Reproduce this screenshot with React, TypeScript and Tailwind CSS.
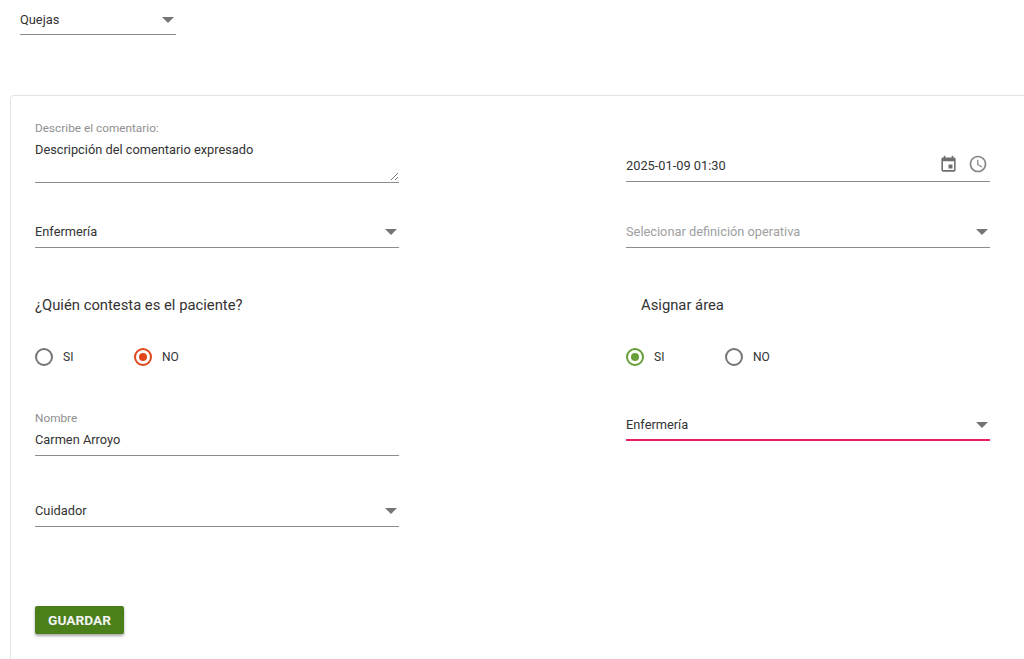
import React from "react";

function Arrow() {
  return (
    <svg width="12" height="6" viewBox="0 0 12 6" className="shrink-0">
      <path d="M0 0h12L6 6z" fill="#757575" />
    </svg>
  );
}

function Select({ text, muted, className }: { text: string; muted?: boolean; className?: string }) {
  return (
    <div className={"flex items-center justify-between border-b border-[#8c8c8c] pr-[2px] " + (className ?? "")}>
      <span className={muted ? "text-[#a0a0a0]" : "text-[#333333]"}>{text}</span>
      <Arrow />
    </div>
  );
}

function Radio({ label, checked, color }: { label: string; checked?: boolean; color?: "orange" | "green" }) {
  const ring = color === "orange" ? "border-[#e0461a]" : color === "green" ? "border-[#689f38]" : "border-[#757575]";
  const dot = color === "orange" ? "bg-[#e0461a]" : "bg-[#689f38]";
  return (
    <div className="flex w-[99px] items-center gap-[10px]">
      <span className={"flex h-[18px] w-[18px] items-center justify-center rounded-full border-2 " + ring}>
        {checked && <span className={"h-[8px] w-[8px] rounded-full " + dot} />}
      </span>
      <span className="text-[12px] text-[#333333]">{label}</span>
    </div>
  );
}

export default function App() {
  return (
    <div className="h-[659px] w-[1024px] overflow-hidden bg-white font-['Roboto',sans-serif] text-[12.8px] leading-5">
      <div className="ml-[20px] w-[156px] pt-[2px]">
        <Select text="Quejas" className="h-[33px] pt-[3px]" />
      </div>

      <div className="ml-[10px] mt-[60px] flex h-[620px] w-[1040px] gap-[227px] rounded-[4px] border border-[#e4e4e4] pl-[24px] pt-[24px]">
        <div className="flex w-[364px] flex-col">
          <div className="relative h-[63px] border-b border-[#8c8c8c]">
            <div className="h-[16px] text-[11.8px] leading-4 text-[#8f8f8f]">Describe el comentario:</div>
            <div className="mt-[4px] text-[#333333]">Descripción del comentario expresado</div>
            <svg width="9" height="9" viewBox="0 0 9 9" className="absolute bottom-[1px] right-0">
              <path d="M1 8L8 1M5 8L8 5" stroke="#777" strokeWidth="1" fill="none" />
            </svg>
          </div>

          <Select text="Enfermería" className="mt-[31px] h-[34px] pt-[2px]" />

          <h2 className="mt-[47px] text-[14.8px] font-normal text-[#333333]">¿Quién contesta es el paciente?</h2>

          <div className="mt-[32px] flex h-[20px] items-center">
            <Radio label="SI" />
            <Radio label="NO" checked color="orange" />
          </div>

          <div className="mt-[43px] h-[46px] border-b border-[#8c8c8c]">
            <div className="h-[16px] text-[11.8px] leading-4 text-[#8f8f8f]">Nombre</div>
            <div className="mt-[4px] text-[#333333]">Carmen Arroyo</div>
          </div>

          <Select text="Cuidador" className="mt-[37px] h-[34px] pt-[2px]" />

          <button className="mt-[79px] h-[28px] w-[89px] rounded-[2px] bg-[#4a7f1a] text-[13.7px] font-bold text-[#f4f4f4] shadow-[0_2px_3px_rgba(0,0,0,0.35)]">
            GUARDAR
          </button>
        </div>

        <div className="flex w-[364px] flex-col">
          <div className="mt-[28px] flex h-[34px] items-center justify-between border-b border-[#8c8c8c] pr-[2px]">
            <span className="pt-[2px] text-[#333333]">2025-01-09 01:30</span>
            <div className="flex items-center gap-[10px] pb-[1px]">
              <svg width="19" height="19" viewBox="0 0 24 24" fill="#6f6f6f">
                <path d="M17 12h-5v5h5v-5zM16 1v2H8V1H6v2H5c-1.11 0-1.99.9-1.99 2L3 19c0 1.1.89 2 2 2h14c1.1 0 2-.9 2-2V5c0-1.1-.9-2-2-2h-1V1h-2zm3 18H5V8h14v11z" />
              </svg>
              <svg width="20" height="20" viewBox="0 0 24 24" fill="#858585">
                <path d="M11.99 2C6.47 2 2 6.48 2 12s4.47 10 9.99 10C17.52 22 22 17.52 22 12S17.52 2 11.99 2zM12 20c-4.42 0-8-3.58-8-8s3.58-8 8-8 8 3.58 8 8-3.58 8-8 8z" />
                <path d="M12.5 7H11v6l5.25 3.15.75-1.23-4.5-2.67z" />
              </svg>
            </div>
          </div>

          <Select text="Selecionar definición operativa" muted className="mt-[32px] h-[34px] pt-[2px]" />

          <h2 className="mt-[47px] pl-[15px] text-[14.8px] font-normal text-[#333333]">Asignar área</h2>

          <div className="mt-[32px] flex h-[20px] items-center">
            <Radio label="SI" checked color="green" />
            <Radio label="NO" />
          </div>

          <div className="mt-[41px] flex h-[33px] items-center justify-between border-b-2 border-[#e91e63] pr-[2px] pt-[2px]">
            <span className="text-[#333333]">Enfermería</span>
            <Arrow />
          </div>
        </div>
      </div>
    </div>
  );
}
